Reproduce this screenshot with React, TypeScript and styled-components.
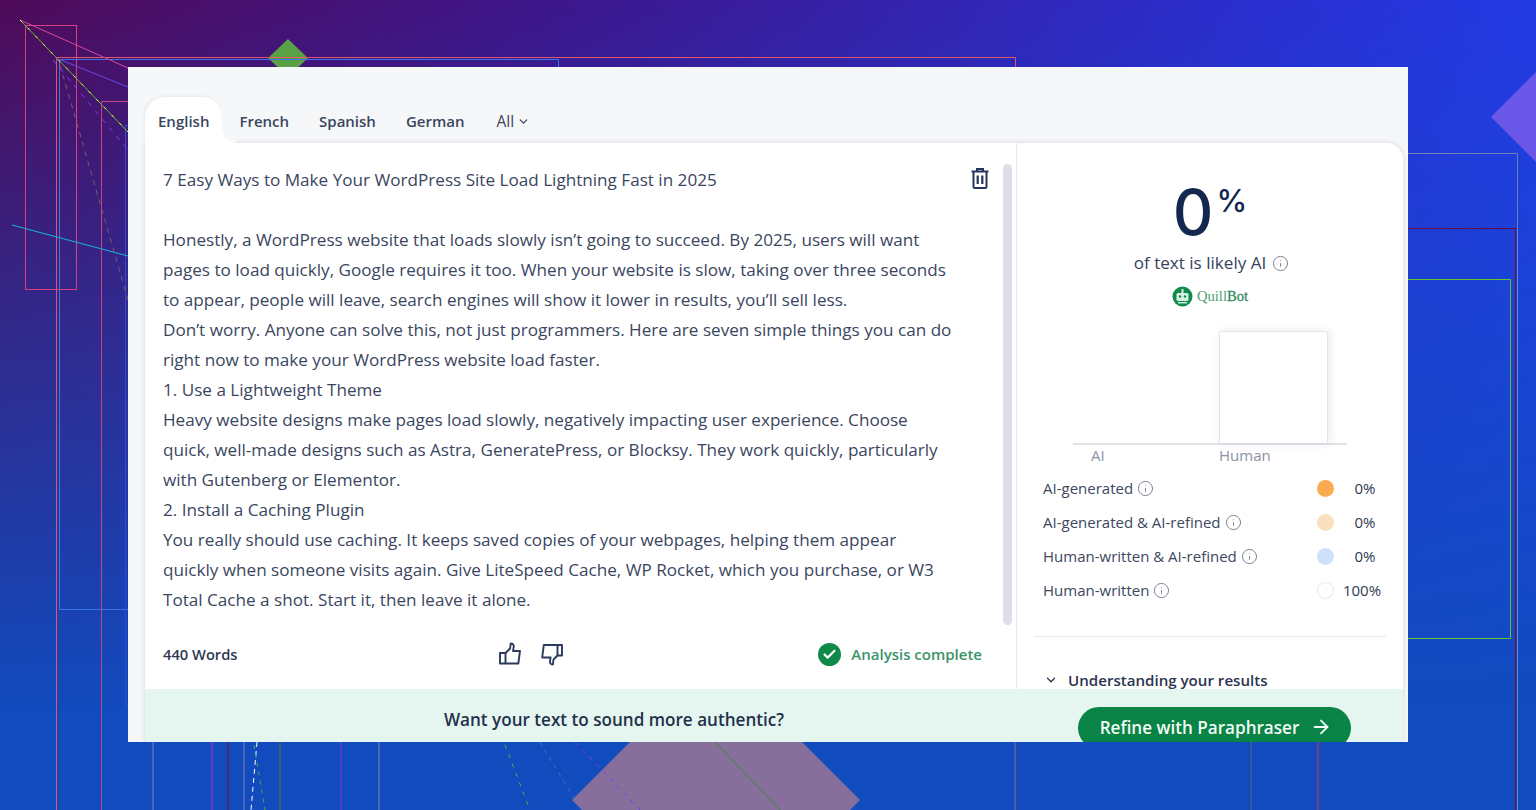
import React from "react";
import styled, { createGlobalStyle } from "styled-components";
import { ChevronDown, Info, ArrowRight, Check } from "lucide-react";

const Global = createGlobalStyle`
  html, body { margin: 0; padding: 0; }
  body { font-family: "Open Sans", "Liberation Sans", sans-serif; color: #33405a; }
`;

const Page = styled.div`
  position: relative;
  width: 1536px;
  height: 810px;
  overflow: hidden;
  box-sizing: border-box;
  padding: 67px 128px 0;
  background:
    linear-gradient(180deg, rgba(17, 75, 190, 0) 0%, #114bbe 88%),
    linear-gradient(100deg, #4f0a58 0%, #3e168a 32%, #2a2fd0 75%, #1f3fee 100%);
`;

const Decor = styled.svg`
  position: absolute;
  inset: 0;
  width: 1536px;
  height: 810px;
`;

const Frame = styled.div`
  position: relative;
  width: 1280px;
  height: 675px;
  background: #f6f7f9;
  overflow: hidden;
  box-sizing: border-box;
  padding-left: 17px;
  padding-right: 5px;
`;

const Tabs = styled.div`
  display: flex;
  align-items: flex-end;
  height: 76px;
`;

const Tab = styled.div<{ $active?: boolean; $plain?: boolean }>`
  position: relative;
  height: 46px;
  box-sizing: border-box;
  display: flex;
  align-items: center;
  gap: 3px;
  padding: 2px 13px 0;
  margin-right: 4px;
  margin-left: ${p => (p.$plain ? "2px" : "0")};
  font-size: ${p => (p.$plain ? "15.5px" : "15px")};
  font-weight: ${p => (p.$plain ? 500 : 600)};
  color: #3a4660;
  background: ${p => (p.$active ? "#fff" : "transparent")};
  border-radius: ${p => (p.$active ? "20px 20px 0 0" : "0")};
  box-shadow: ${p => (p.$active ? "-1px -1px 3px rgba(30,40,70,.07)" : "none")};
  z-index: ${p => (p.$active ? 2 : 0)};
  ${p =>
    p.$active
      ? `&::after {
           content: "";
           position: absolute;
           right: -14px;
           bottom: 0;
           width: 14px;
           height: 14px;
           background: radial-gradient(circle at 100% 0, #f6f7f9 13.5px, #fff 14px);
         }`
      : ""}
`;

const Card = styled.div`
  position: relative;
  width: 1258px;
  height: 599px;
  background: #fff;
  border-radius: 0 16px 0 0;
  box-shadow: 0 0 5px rgba(30, 40, 70, 0.16);
  display: grid;
  grid-template-columns: 872px 386px;
  grid-template-rows: 546px 53px;
  overflow: hidden;
`;

const LeftPanel = styled.section`
  display: flex;
  flex-direction: column;
  border-right: 1px solid #e6e8ec;
  box-sizing: border-box;
`;

const Editor = styled.div`
  height: 484px;
  box-sizing: border-box;
  display: flex;
  align-items: flex-start;
  padding: 22px 0 0 18px;
`;

const Copy = styled.div`
  flex: 0 0 807px;
  font-size: 17.12px;
  line-height: 30px;
  color: #3a4660;
`;

const Line = styled.div`
  height: 30px;
  white-space: nowrap;
`;

const Trash = styled.svg`
  flex: 0 0 20px;
  width: 20px;
  height: 22px;
  margin-top: 2px;
`;

const ScrollThumb = styled.div`
  flex: 0 0 9px;
  height: 461px;
  margin: -1px 0 0 13px;
  border-radius: 5px;
  background: #dcdfe5;
`;

const Footer = styled.div`
  height: 54px;
  box-sizing: border-box;
  padding: 0 34px 0 18px;
  display: grid;
  grid-template-columns: 335px 66px 1fr;
  align-items: center;
`;

const Words = styled.div`
  font-size: 14.7px;
  font-weight: 600;
  color: #2f3a52;
`;

const Thumbs = styled.div`
  display: flex;
  justify-content: space-between;
  align-items: center;
`;

const Status = styled.div`
  display: flex;
  justify-content: flex-end;
  align-items: center;
  gap: 10px;
  font-size: 15px;
  font-weight: 600;
  color: #3a9468;
`;

const CheckDot = styled.span`
  width: 23px;
  height: 23px;
  border-radius: 50%;
  background: #0f8a4a;
  display: flex;
  align-items: center;
  justify-content: center;
  color: #fff;
`;

const RightPanel = styled.aside`
  box-sizing: border-box;
  padding-top: 30px;
  overflow: hidden;
`;

const Score = styled.div`
  height: 78px;
  display: flex;
  justify-content: center;
  color: #14284f;
  font-family: Inter, "Open Sans", sans-serif;
`;

const ScoreValue = styled.span`
  font-size: 63px;
  line-height: 78px;
  font-weight: 500;
`;

const ScoreUnit = styled.span`
  font-size: 31px;
  line-height: 56px;
  font-weight: 500;
  margin-left: 3px;
`;

const Likely = styled.div`
  height: 24px;
  display: flex;
  justify-content: center;
  align-items: center;
  gap: 6px;
  padding-left: 3px;
  font-size: 17.1px;
  line-height: 24px;
  color: #37435c;
`;

const Brand = styled.div`
  height: 20px;
  margin-top: 11px;
  display: flex;
  justify-content: center;
  align-items: center;
  gap: 4px;
  font-family: "Liberation Serif", serif;
  font-size: 14.6px;
  color: #4d9f74;
  b { font-weight: 400; color: #2f8a5d; -webkit-text-stroke: 0.3px #2f8a5d; }
`;

const Chart = styled.div`
  width: 274px;
  height: 114px;
  margin: 25px 0 0 56px;
  border-bottom: 2px solid #e1e3e9;
  padding-left: 146px;
  box-sizing: border-box;
`;

const Bar = styled.div`
  width: 109px;
  height: 112px;
  background: #fff;
  border-radius: 3px 3px 0 0;
  border: 1px solid #e2e4e9;
  border-bottom: 0;
  box-sizing: border-box;
  box-shadow: 2px 0 10px rgba(30, 40, 70, 0.1);
`;

const AxisLabels = styled.div`
  display: grid;
  grid-template-columns: 146px 1fr;
  margin-left: 56px;
  height: 20px;
  font-size: 15px;
  line-height: 20px;
  color: #8b92a3;
`;

const AxisLabel = styled.span<{ $inset?: number }>`
  padding-left: ${p => p.$inset ?? 0}px;
`;

const Rows = styled.div`
  margin-top: 6px;
  padding: 0 20px 0 26px;
`;

const Row = styled.div`
  height: 34px;
  display: flex;
  align-items: center;
  font-size: 15px;
  color: #3c4860;
`;

const RowLabel = styled.div`
  flex: 1;
  display: flex;
  align-items: center;
  gap: 4px;
`;

const Dot = styled.span<{ $c: string; $line?: boolean }>`
  width: 17px;
  height: 17px;
  border-radius: 50%;
  background: ${p => p.$c};
  box-sizing: border-box;
  border: ${p => (p.$line ? "1px solid #e4e6ea" : "none")};
`;

const Pct = styled.span<{ $wide?: boolean }>`
  width: 42px;
  margin-left: 7px;
  box-sizing: border-box;
  padding-left: ${p => (p.$wide ? "0" : "6px")};
  text-align: center;
  color: #2f3a52;
`;

const Divider = styled.div`
  height: 1px;
  margin: 29px 17px 0;
  background: #e6e8ec;
`;

const Accordion = styled.div`
  margin: 31px 0 0 27px;
  height: 24px;
  display: flex;
  align-items: center;
  gap: 10px;
  font-size: 15.1px;
  font-weight: 600;
  color: #2a3550;
`;

const Banner = styled.div`
  grid-column: 1 / -1;
  background: #e4f6ef;
  display: flex;
  align-items: flex-start;
  overflow: hidden;
`;

const Ask = styled.div`
  width: 933px;
  padding: 19px 0 0 5px;
  box-sizing: border-box;
  text-align: center;
  font-size: 17.1px;
  line-height: 24px;
  font-weight: 600;
  color: #24304c;
`;

const Refine = styled.button`
  flex: 0 0 273px;
  height: 42px;
  margin-top: 18px;
  border: 0;
  border-radius: 21px;
  background: #0a8446;
  color: #f2fbf6;
  font: 600 17.1px "Open Sans", sans-serif;
  display: flex;
  align-items: center;
  justify-content: center;
  gap: 11px;
  padding: 0 0 2px 3px;
`;

const InfoIcon = () => <Info size={17} strokeWidth={1.4} color="#7a8294" />;

const ThumbUp = () => (
  <svg width="24" height="24" viewBox="0 0 24 24" fill="none" stroke="#2a3a5c" strokeWidth="1.9" strokeLinejoin="round">
    <path d="M2 11h5.5v10.5H2z" />
    <path d="M7.5 11l4.6-4.5.6-5c2.3 0 3.4 1.6 3 3.6L15 9h7l-1.7 12.5H7.5" />
  </svg>
);

const ThumbDown = () => (
  <svg width="24" height="24" viewBox="0 0 24 24" fill="none" stroke="#2a3a5c" strokeWidth="1.9" strokeLinejoin="round">
    <path d="M22 13.5h-4.5V3H22z" />
    <path d="M17.5 13.5l-4 4-.6 5c-2.3 0-3.3-1.6-2.9-3.6l.6-3.4H2.2L3.8 3h13.7" />
  </svg>
);

const lines = [
  "Honestly, a WordPress website that loads slowly isn’t going to succeed. By 2025, users will want",
  "pages to load quickly, Google requires it too. When your website is slow, taking over three seconds",
  "to appear, people will leave, search engines will show it lower in results, you’ll sell less.",
  "Don’t worry. Anyone can solve this, not just programmers. Here are seven simple things you can do",
  "right now to make your WordPress website load faster.",
  "1. Use a Lightweight Theme",
  "Heavy website designs make pages load slowly, negatively impacting user experience. Choose",
  "quick, well-made designs such as Astra, GeneratePress, or Blocksy. They work quickly, particularly",
  "with Gutenberg or Elementor.",
  "2. Install a Caching Plugin",
  "You really should use caching. It keeps saved copies of your webpages, helping them appear",
  "quickly when someone visits again. Give LiteSpeed Cache, WP Rocket, which you purchase, or W3",
  "Total Cache a shot. Start it, then leave it alone.",
];

const rows = [
  { label: "AI-generated", color: "#fbab4f", pct: "0%" },
  { label: "AI-generated & AI-refined", color: "#fae0bf", pct: "0%" },
  { label: "Human-written & AI-refined", color: "#cfe0fb", pct: "0%" },
  { label: "Human-written", color: "#fff", pct: "100%", line: true },
];

type Seg = [number, number, number, number, string, string?];
const segs: Seg[] = [
  [20, 20, 128, 68, "#d9479a"],
  [20, 20, 128, 132, "#64b52a"],
  [20, 20, 128, 132, "#d8ff50", "3 8"],
  [56, 58, 128, 87, "#6a48ea"],
  [53, 60, 128, 150, "#7a3ff0", "5 6"],
  [60, 65, 128, 300, "#7c5a70", "5 5"],
  [12, 225, 128, 256, "#16b6d6"],
  [153, 742, 153, 810, "#7d86b0"],
  [212, 742, 212, 810, "#d21fd8"],
  [228, 742, 228, 810, "#7a0a30"],
  [244, 742, 244, 810, "#7d86b0"],
  [280, 742, 280, 810, "#66701a"],
  [341, 742, 341, 810, "#9a30d8"],
  [379, 742, 379, 810, "#7d86b0"],
  [257, 742, 251, 810, "#ffffff", "5 4"],
  [254, 745, 265, 810, "#3fae4a", "4 5"],
  [505, 745, 530, 810, "#48b848", "4 6"],
  [540, 742, 575, 800, "#3a78b8", "4 5"],
  [575, 742, 640, 810, "#7c3cf0", "5 5"],
  [715, 742, 780, 810, "#3f8a3a"],
  [1015, 742, 1015, 810, "#8c6e90"],
  [1251, 742, 1251, 810, "#566a68"],
  [1318, 742, 1318, 810, "#e2343c"],
];

export default function App() {
  return (
    <>
      <Global />
      <Page>
        <Decor viewBox="0 0 1536 810" fill="none">
          <path d="M1491 117L1536 72V162Z" fill="#6c58e8" />
          <path d="M288 39L308 58L288 77L268 58Z" fill="#5aa045" />
          <path d="M716 656L860 800L850 810H582L572 800Z" fill="#86709b" />
          <rect x="25.5" y="25.5" width="51" height="264" stroke="#d9407f" />
          <path d="M56.5 810V57.5H1015.5V100" stroke="#e2566c" />
          <rect x="59.5" y="59.5" width="499" height="550" stroke="#3a74e6" />
          <path d="M128 101.5H101.5V810" stroke="#c8447a" />
          <path d="M128 125.5H125.5V705.5H128" stroke="#2f48e0" />
          <path d="M1408 153.5H1517.5V810" stroke="#6f80b8" />
          <path d="M1408 228.5H1515.5V810" stroke="#6a0a40" />
          <path d="M1408 279.5H1510.5V638.5H1408" stroke="#62c22a" />
          {segs.map(([a, b, c, d, s, dash], i) => (
            <line key={i} x1={a} y1={b} x2={c} y2={d} stroke={s} strokeDasharray={dash} />
          ))}
        </Decor>
        <Frame>
          <Tabs>
            <Tab $active>English</Tab>
            <Tab>French</Tab>
            <Tab>Spanish</Tab>
            <Tab>German</Tab>
            <Tab $plain>
              All <ChevronDown size={13} strokeWidth={2.4} />
            </Tab>
          </Tabs>
          <Card>
            <LeftPanel>
              <Editor>
                <Copy>
                  <Line>7 Easy Ways to Make Your WordPress Site Load Lightning Fast in 2025</Line>
                  <Line />
                  {lines.map(l => (
                    <Line key={l}>{l}</Line>
                  ))}
                </Copy>
                <Trash viewBox="0 0 20 22" fill="none" stroke="#25345a" strokeWidth="2">
                  <path d="M1.5 4.5h17M7 4V2h6v2M3.5 4.5V19.5a1.5 1.5 0 0 0 1.5 1.5h10a1.5 1.5 0 0 0 1.5-1.5V4.5" />
                  <path d="M7.7 8.5v8.5M12.3 8.5v8.5" strokeWidth="2.2" />
                </Trash>
                <ScrollThumb />
              </Editor>
              <Footer>
                <Words>440 Words</Words>
                <Thumbs>
                  <ThumbUp />
                  <ThumbDown />
                </Thumbs>
                <Status>
                  <CheckDot>
                    <Check size={15} strokeWidth={3.4} />
                  </CheckDot>
                  Analysis complete
                </Status>
              </Footer>
            </LeftPanel>
            <RightPanel>
              <Score>
                <ScoreValue>0</ScoreValue>
                <ScoreUnit>%</ScoreUnit>
              </Score>
              <Likely>
                of text is likely AI <InfoIcon />
              </Likely>
              <Brand>
                <svg width="21" height="21" viewBox="0 0 21 21">
                  <circle cx="10.5" cy="10.5" r="10" fill="#0f8a4a" />
                  <rect x="4.5" y="7" width="12" height="8" rx="1.5" fill="#d8f0e2" />
                  <rect x="9.5" y="3" width="2" height="4" fill="#d8f0e2" />
                  <circle cx="8" cy="10.5" r="1.2" fill="#0f8a4a" />
                  <circle cx="13" cy="10.5" r="1.2" fill="#0f8a4a" />
                  <rect x="6" y="16" width="9" height="1.4" fill="#d8f0e2" />
                </svg>
                <span>
                  Quill<b>Bot</b>
                </span>
              </Brand>
              <Chart>
                <Bar />
              </Chart>
              <AxisLabels>
                <AxisLabel $inset={18}>AI</AxisLabel>
                <AxisLabel>Human</AxisLabel>
              </AxisLabels>
              <Rows>
                {rows.map(r => (
                  <Row key={r.label}>
                    <RowLabel>
                      {r.label} <InfoIcon />
                    </RowLabel>
                    <Dot $c={r.color} $line={r.line} />
                    <Pct $wide={r.line}>{r.pct}</Pct>
                  </Row>
                ))}
              </Rows>
              <Divider />
              <Accordion>
                <ChevronDown size={14} strokeWidth={2.2} />
                Understanding your results
              </Accordion>
            </RightPanel>
            <Banner>
              <Ask>Want your text to sound more authentic?</Ask>
              <Refine>
                Refine with Paraphraser <ArrowRight size={22} strokeWidth={2} />
              </Refine>
            </Banner>
          </Card>
        </Frame>
      </Page>
    </>
  );
}
